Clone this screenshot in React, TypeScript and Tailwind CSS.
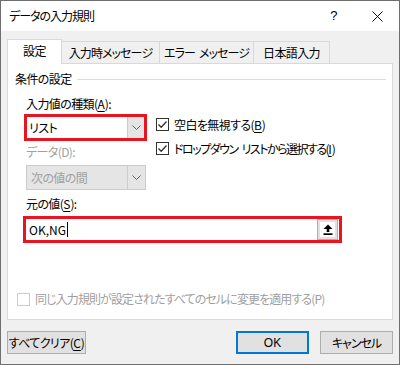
import React from 'react';

const font = "font-['Meiryo_UI','Noto_Sans_CJK_JP',sans-serif] [font-feature-settings:'palt'] tracking-[-0.6px]";

const Chevron: React.FC<{ color?: string }> = ({ color = '#606060' }) => (
  <svg width="9" height="5" viewBox="0 0 9 5">
    <polyline points="0.5,0.5 4.5,4.5 8.5,0.5" fill="none" stroke={color} strokeWidth="1" />
  </svg>
);

const CheckBox: React.FC<{ checked?: boolean; disabled?: boolean }> = ({ checked, disabled }) => (
  <div
    className={`w-[13px] h-[13px] border flex items-center justify-center shrink-0 ${
      disabled ? 'border-[#cccccc] bg-white' : 'border-[#333333] bg-white'
    }`}
  >
    {checked && (
      <svg width="11" height="11" viewBox="0 0 11 11">
        <polyline points="1.5,5.5 4.2,8.3 9.5,2.5" fill="none" stroke="#333333" strokeWidth="1.3" />
      </svg>
    )}
  </div>
);

const U: React.FC<{ children: React.ReactNode }> = ({ children }) => (
  <span className="underline underline-offset-2 tracking-normal">{children}</span>
);

export default function App() {
  return (
    <div className={`w-[400px] h-[365px] flex flex-col bg-[#f0f0f0] border border-[#6f6f6f] text-[12px] text-black ${font}`}>
      {/* title bar */}
      <div className="h-[30px] bg-white flex items-center pl-[8px] shrink-0">
        <span className="text-[12px] leading-none tracking-[-1px]">データの入力規則</span>
        <span className="ml-auto mr-[35px] text-[13px] font-['Liberation_Sans',sans-serif]">?</span>
        <svg width="11" height="11" viewBox="0 0 11 11" className="mr-[16px]">
          <line x1="0.5" y1="0.5" x2="10.5" y2="10.5" stroke="#111" strokeWidth="1" />
          <line x1="10.5" y1="0.5" x2="0.5" y2="10.5" stroke="#111" strokeWidth="1" />
        </svg>
      </div>

      <div className="flex-1 flex flex-col px-[6px] pt-[8px]">
        {/* tabs */}
        <div className="flex items-end h-[24px]">
          <div className="relative z-10 h-[25px] -mb-px w-[55px] bg-white border-l border-t border-r border-[#d9d9d9] flex items-center justify-center pb-[2px]">
            設定
          </div>
          <div className="h-[22px] w-[98px] border-t border-r border-[#d9d9d9] flex items-center justify-center tracking-[-0.9px]">
            入力時メッセージ
          </div>
          <div className="h-[22px] w-[94px] border-t border-r border-[#d9d9d9] flex items-center justify-center tracking-[-0.9px]">
            <span>エラー</span>
            <span className="ml-[4px]">メッセージ</span>
          </div>
          <div className="h-[22px] w-[76px] border-t border-r border-[#d9d9d9] flex items-center justify-center">
            日本語入力
          </div>
        </div>

        {/* panel */}
        <div className="h-[257px] bg-white border border-[#d9d9d9] flex flex-col pl-[7px] pr-[6px] pt-[7px]">
          <div className="flex items-center h-[16px]">
            <span>条件の設定</span>
            <div className="flex-1 h-px bg-[#dcdcdc] ml-[5px]" />
          </div>

          <div className="ml-[11px] mt-[9px] h-[16px] flex items-center">
            入力値の種類(<U>A</U>):
          </div>

          <div className="flex mt-[2px]">
            <div className="flex flex-col">
              <div className="ml-[9px] w-[123px] h-[27px] border-[3px] border-[#e8141f] bg-white flex">
                <div className="flex-1 flex items-center pl-[2px]">リスト</div>
                <div className="w-[17px] bg-[#e5e5e5] border-l border-[#cccccc] flex items-center justify-center">
                  <Chevron />
                </div>
              </div>
              <div className="ml-[11px] mt-[3px] h-[16px] flex items-center text-[#a0a0a0]">データ(D):</div>
              <div className="ml-[11px] mt-[5px] w-[120px] h-[25px] border border-[#cccccc] bg-[#e5e5e5] flex">
                <div className="flex-1 flex items-center pl-[4px] text-[#a0a0a0]">次の値の間</div>
                <div className="w-[18px] border-l border-[#cccccc] flex items-center justify-center">
                  <Chevron color="#606060" />
                </div>
              </div>
            </div>

            <div className="flex flex-col ml-[9px] pt-[4px] gap-[11px]">
              <div className="flex items-center h-[13px] gap-[5px]">
                <CheckBox checked />
                <span>空白を無視する(<U>B</U>)</span>
              </div>
              <div className="flex items-center h-[13px] gap-[5px]">
                <CheckBox checked />
                <span className="tracking-[-1.5px] whitespace-nowrap flex items-center">
                  <span>ドロップダウン</span>
                  <span className="ml-[4px]">リストから選択する(<U>I</U>)</span>
                </span>
              </div>
            </div>
          </div>

          <div className="ml-[11px] mt-[6px] h-[16px] flex items-center">
            元の値(<U>S</U>):
          </div>

          <div className="ml-[8px] mt-[4px] w-[319px] h-[27px] border-[3px] border-[#e8141f] bg-white flex items-center">
            <div className="flex-1 flex items-center pl-[3px] h-full tracking-normal">
              <span>OK,NG</span>
              <span className="w-px h-[15px] bg-black ml-px" />
            </div>
            <div className="w-[21px] h-[21px] mr-[1px] border border-[#adadad] bg-[#e1e1e1] flex items-center justify-center">
              <div className="w-[15px] h-[15px] bg-white flex items-center justify-center">
                <svg width="10" height="11" viewBox="0 0 10 11">
                  <polygon points="5,0.5 9.5,5 6.3,5 6.3,8 3.7,8 3.7,5 0.5,5" fill="#000" />
                  <rect x="0.5" y="9.3" width="9" height="1.7" fill="#000" />
                </svg>
              </div>
            </div>
          </div>

          <div className="flex items-center gap-[5px] mt-auto mb-[11px] ml-[2px]">
            <CheckBox disabled />
            <span className="text-[#a0a0a0] tracking-[-0.9px]">同じ入力規則が設定されたすべてのセルに変更を適用する(P)</span>
          </div>
        </div>

        {/* buttons */}
        <div className="flex items-center mt-[11px]">
          <button className="w-[79px] h-[23px] px-0 whitespace-nowrap bg-[#e1e1e1] border border-[#adadad] flex items-center justify-center">
            すべてクリア(<U>C</U>)
          </button>
          <button className="ml-auto w-[73px] h-[23px] bg-[#e1e1e1] border-2 border-[#0078d7] flex items-center justify-center font-['Liberation_Sans','Noto_Sans_CJK_JP',sans-serif] tracking-normal">
            OK
          </button>
          <button className="ml-[11px] w-[73px] h-[23px] whitespace-nowrap bg-[#e1e1e1] border border-[#adadad] flex items-center justify-center tracking-[-1px]">
            キャンセル
          </button>
        </div>
      </div>
    </div>
  );
}
